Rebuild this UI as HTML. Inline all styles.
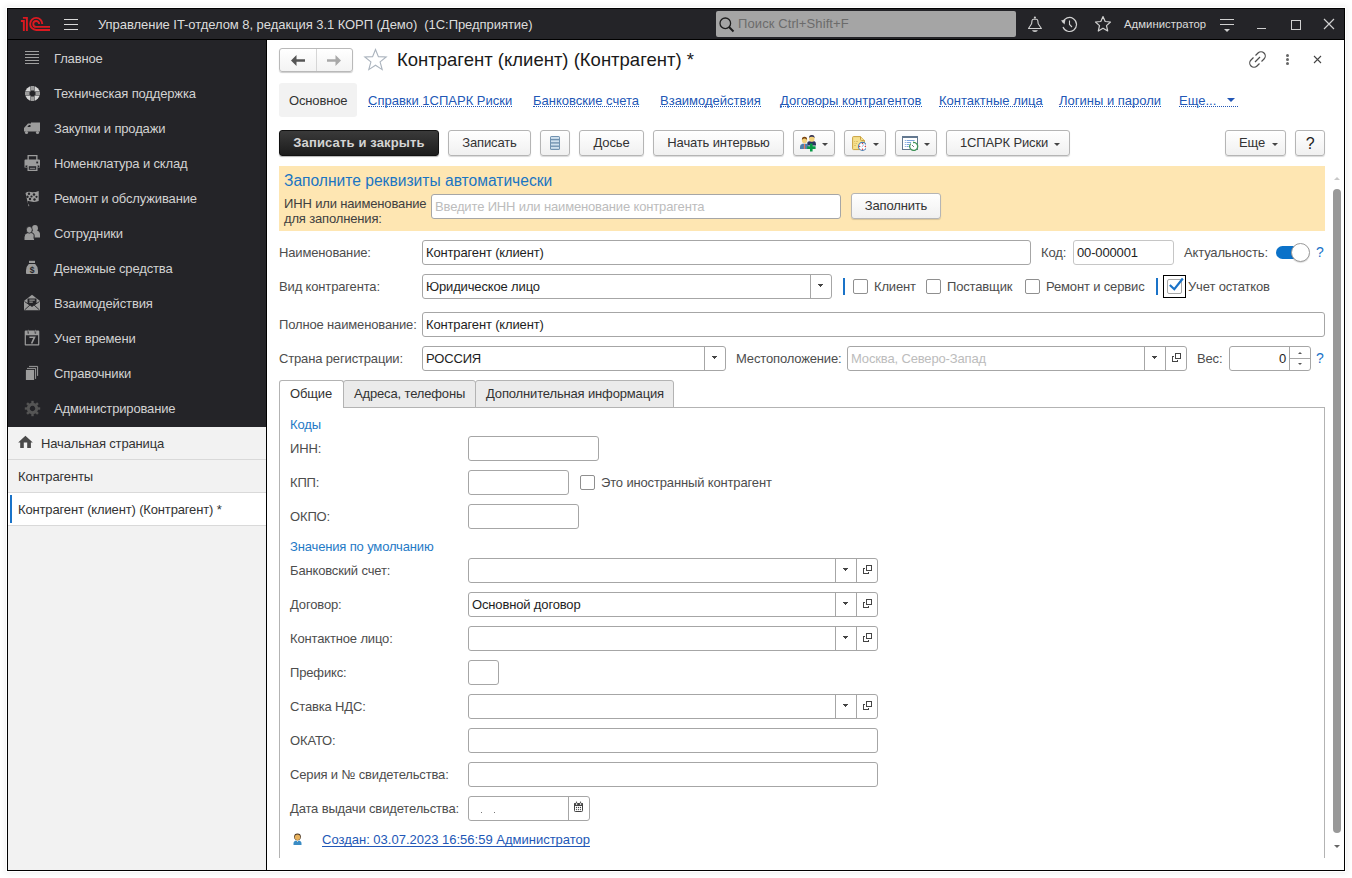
<!DOCTYPE html>
<html><head><meta charset="utf-8">
<style>
*{box-sizing:border-box;margin:0;padding:0}
html,body{width:1352px;height:878px;overflow:hidden;background:#fff;font-family:"Liberation Sans",sans-serif;font-size:13px;color:#4d4d4d;letter-spacing:-0.15px}
.a{position:absolute}
.t{position:absolute;white-space:nowrap;line-height:16px}
#win{position:absolute;left:7px;top:8px;width:1338px;height:863px;border:1px solid #000;box-shadow:0 0 0 1px #fff,0 0 6px 2px rgba(0,0,0,0.07);background:#fff;overflow:hidden}
#hdr{position:absolute;left:8px;top:9px;width:1336px;height:30px;background:#242428}
#hdrline{position:absolute;left:8px;top:39px;width:1336px;height:1px;background:#000}
#side{position:absolute;left:8px;top:40px;width:258px;height:387px;background:#242428}
#sidel{position:absolute;left:8px;top:427px;width:258px;height:443px;background:#f2f2f2}
#vline{position:absolute;left:266px;top:40px;width:1px;height:830px;background:#000}
.mi{position:absolute;left:54px;color:#d2d2d2;white-space:nowrap;line-height:16px}
.ic{position:absolute}
.btn{position:absolute;height:25px;border:1px solid #b5b5b5;border-radius:3px;background:linear-gradient(#fff,#f0f0f0);box-shadow:0 1px 1px rgba(0,0,0,0.15);color:#333;text-align:center;line-height:23px;white-space:nowrap}
.inp{position:absolute;height:25px;border:1px solid #a6a6a6;border-radius:3px;background:#fff;color:#1e1e1e;line-height:23px;padding-left:3px;white-space:nowrap;overflow:hidden}
.lbl{position:absolute;white-space:nowrap;color:#4d4d4d;line-height:16px}
.lnk{letter-spacing:0;position:absolute;white-space:nowrap;color:#2257b6;line-height:14px;border-bottom:1px dotted #2257b6}
.cb{position:absolute;width:15px;height:15px;border:1px solid #8f8f8f;border-radius:2px;background:#fff}
.dd{position:absolute;top:0;width:21px;height:23px;border-left:1px solid #a6a6a6}
.dd:after{content:"";position:absolute;left:7px;top:9px;width:5px;height:3px;background:linear-gradient(#444,#444) 0 0/5px 1px no-repeat,linear-gradient(#444,#444) 1px 1px/3px 1px no-repeat,linear-gradient(#444,#444) 2px 2px/1px 1px no-repeat}
.op{position:absolute;top:0;width:21px;height:23px;border-left:1px solid #a6a6a6}
.op:before{content:"";position:absolute;left:6px;top:9px;width:4px;height:4px;border:1px solid #444}
.op:after{content:"";position:absolute;left:9px;top:6px;width:4px;height:4px;border:1.3px solid #444;background:#fff;box-shadow:0 0 0 1px #fff}
.grp{position:absolute;white-space:nowrap;color:#1f7ac6;line-height:16px}
.arr{display:inline-block;border-left:3px solid transparent;border-right:3px solid transparent;border-top:3px solid #4d4d4d;vertical-align:middle}
</style></head><body>
<div id="win"></div>
<div id="hdr"></div>
<div id="hdrline"></div>
<div id="side"></div>
<div id="sidel"></div>
<div id="vline"></div>
<!-- header -->
<svg class="ic" style="left:18px;top:14px" width="36" height="20" viewBox="0 0 36 20">
 <g fill="none" stroke="#dc1920" stroke-width="1.9" stroke-linejoin="miter">
  <path d="M2.9 7 H5.85 V16.9"/>
  <path d="M4.9 3.85 H8.9 V16.9"/>
  <path d="M24.25 9.9 A6.05 6.05 0 1 0 18.2 15.95 H32"/>
  <path d="M21.15 9.9 A2.95 2.95 0 1 0 18.2 12.85 H32"/>
 </g>
</svg>
<div class="a" style="left:64px;top:19px;width:14px;height:1px;background:#d9d9d9"></div>
<div class="a" style="left:64px;top:24px;width:14px;height:1px;background:#d9d9d9"></div>
<div class="a" style="left:64px;top:29px;width:14px;height:1px;background:#d9d9d9"></div>
<div class="t" style="left:98px;top:17px;color:#dcdcdc;letter-spacing:-0.05px">Управление IT-отделом 8, редакция 3.1 КОРП (Демо)&nbsp; (1С:Предприятие)</div>
<div class="a" style="left:716px;top:11px;width:300px;height:26px;background:#a5a5a5;border-radius:2px"></div>
<svg class="ic" style="left:719px;top:17px" width="16" height="16" viewBox="0 0 16 16"><circle cx="6.3" cy="6.3" r="5.3" fill="none" stroke="#1e1e1e" stroke-width="1.3"/><path d="M10 10 L14.5 14.5" stroke="#1e1e1e" stroke-width="2"/></svg>
<div class="t" style="left:738px;top:16px;color:#6b6b6b;letter-spacing:0.1px">Поиск Ctrl+Shift+F</div>
<svg class="ic" style="left:1027px;top:16px" width="16" height="17" viewBox="0 0 16 17"><circle cx="7.9" cy="1.6" r="1.1" fill="#d0d0d0"/><path d="M1.5 12.5 L4.6 7.8 L5 4.6 Q5.3 3.3 6.5 3.3 H9.3 Q10.5 3.3 10.8 4.6 L11.2 7.8 L14.4 12.5 Z" fill="none" stroke="#d0d0d0" stroke-width="1.1" stroke-linejoin="round"/><path d="M5 14.3 H10.9 Q10.5 15.9 7.95 15.9 Q5.4 15.9 5 14.3 Z" fill="#d0d0d0"/></svg>
<svg class="ic" style="left:1060px;top:16px" width="18" height="17" viewBox="0 0 18 17"><path d="M2.8 6.5 A7 7 0 1 1 3 11" fill="none" stroke="#d0d0d0" stroke-width="1.2"/><path d="M1 4.5 L4.5 8.5 L5.5 3.5Z" fill="#d0d0d0"/><path d="M9.5 4.5 L9.5 8.5 L12 11" fill="none" stroke="#d0d0d0" stroke-width="1.1"/></svg>
<svg class="ic" style="left:1094px;top:15px" width="18" height="18" viewBox="0 0 18 18"><path d="M9 1.5 L11.2 6.5 L16.5 7 L12.5 10.6 L13.7 16 L9 13.2 L4.3 16 L5.5 10.6 L1.5 7 L6.8 6.5 Z" fill="none" stroke="#d0d0d0" stroke-width="1.2" stroke-linejoin="round"/></svg>
<div class="t" style="left:1124px;top:16px;font-size:11.3px;color:#dcdcdc;letter-spacing:0.05px">Администратор</div>
<div class="a" style="left:1220px;top:19px;width:14px;height:1px;background:#d0d0d0"></div>
<div class="a" style="left:1220px;top:24px;width:14px;height:1px;background:#d0d0d0"></div>
<div class="a" style="left:1224px;top:29px;border-left:3px solid transparent;border-right:3px solid transparent;border-top:3px solid #d0d0d0"></div>
<div class="a" style="left:1257px;top:28px;width:9px;height:1px;background:#d0d0d0"></div>
<div class="a" style="left:1291px;top:20px;width:10px;height:10px;border:1.3px solid #d0d0d0"></div>
<svg class="ic" style="left:1323px;top:18px" width="12" height="12" viewBox="0 0 12 12"><path d="M1 1 L11 11 M11 1 L1 11" stroke="#d0d0d0" stroke-width="1.2"/></svg>

<!-- sidebar items -->
<div class="mi" style="top:51px">Главное</div>
<div class="mi" style="top:86px">Техническая поддержка</div>
<div class="mi" style="top:121px">Закупки и продажи</div>
<div class="mi" style="top:156px">Номенклатура и склад</div>
<div class="mi" style="top:191px">Ремонт и обслуживание</div>
<div class="mi" style="top:226px">Сотрудники</div>
<div class="mi" style="top:261px">Денежные средства</div>
<div class="mi" style="top:296px">Взаимодействия</div>
<div class="mi" style="top:331px">Учет времени</div>
<div class="mi" style="top:366px">Справочники</div>
<div class="mi" style="top:401px">Администрирование</div>
<!-- sidebar icons -->
<svg class="ic" style="left:24px;top:50px" width="16" height="16" viewBox="0 0 16 16"><g stroke="#a0a0a0" stroke-width="1"><path d="M1 1.5H15M1 4.5H15M1 7.5H15M1 10.5H15M1 13.5H15"/></g></svg>
<svg class="ic" style="left:24px;top:85px" width="17" height="17" viewBox="0 0 17 17">
 <circle cx="8.5" cy="8.5" r="7.5" fill="#d6d6d6"/>
 <g fill="#242428"><rect x="6.5" y="0" width="4" height="17"/><rect x="0" y="6.5" width="17" height="4"/></g>
 <g fill="#9c9c9c"><rect x="7" y="1" width="3" height="4.5"/><rect x="7" y="11.5" width="3" height="4.5"/><rect x="1" y="7" width="4.5" height="3"/><rect x="11.5" y="7" width="4.5" height="3"/></g>
</svg>
<svg class="ic" style="left:23px;top:122px" width="18" height="13" viewBox="0 0 18 13">
 <path d="M1 6 L5 1.5 L8 1.5 L8 0.5 L17 0.5 L17 9.5 L1 9.5Z" fill="#9c9c9c"/>
 <path d="M4.3 5 L6 3 L7.5 3 L7.5 5Z" fill="#242428"/>
 <circle cx="3.5" cy="10.5" r="1.6" fill="#9c9c9c"/><circle cx="14.5" cy="10.5" r="1.6" fill="#9c9c9c"/>
 <path d="M2 10H5.5M13 10H16" stroke="#242428" stroke-width="0"/>
</svg>
<svg class="ic" style="left:24px;top:154px" width="17" height="18" viewBox="0 0 17 18">
 <path d="M3.5 1 H13.5 V6 H12.2 V2.3 H4.8 V6 H3.5Z" fill="#9c9c9c"/>
 <path d="M0.5 6.5 Q0.5 5.5 1.5 5.5 H15 Q16 5.5 16 6.5 V13.5 H13.5 V11 H3.5 V13.5 H0.5Z" fill="#9c9c9c"/>
 <rect x="12.3" y="7.6" width="1.8" height="1.8" fill="#242428"/>
 <rect x="1.5" y="11.5" width="1.5" height="1.5" fill="#242428"/><rect x="13.9" y="11.5" width="1.5" height="1.5" fill="#242428"/>
 <path d="M3.5 11 H13.5 V17 H3.5Z M4.8 12.3 V15.7 H12.2 V12.3Z" fill="#9c9c9c" fill-rule="evenodd"/>
 <rect x="5.8" y="13.8" width="5.4" height="0.9" fill="#9c9c9c"/>
</svg>
<svg class="ic" style="left:24px;top:190px" width="16" height="17" viewBox="0 0 16 17">
 <path d="M1.5 3 Q4 1 7 2 Q10 3 14.7 1 L14.7 11 Q10 12.5 7 11.5 Q4 10.5 2.8 11.5 L5.5 16 L4.5 16.3 Z" fill="#9c9c9c"/>
 <g fill="#242428"><circle cx="5" cy="3.8" r="1.2"/><circle cx="10" cy="4.5" r="1.2"/><circle cx="3.5" cy="6.8" r="1.2"/><circle cx="7.5" cy="6.5" r="1.1"/><circle cx="12.5" cy="6.8" r="1.1"/><circle cx="6" cy="9" r="1.2"/><circle cx="10.5" cy="9.5" r="1.2"/></g>
</svg>
<svg class="ic" style="left:23px;top:224px" width="18" height="17" viewBox="0 0 18 17">
 <path d="M9 7.5 Q9.5 6.5 11 6.5 H13.5 Q17 7 17 10.5 V13.5 H10Z" fill="#9c9c9c"/>
 <ellipse cx="12" cy="4.2" rx="2.9" ry="3.3" fill="#9c9c9c"/>
 <path d="M11 14 Q12 9 8 8.5 H5 Q1 9 1 13 V16.5 H12Z" fill="#9c9c9c" stroke="#242428" stroke-width="1"/>
 <ellipse cx="6.3" cy="5.8" rx="3" ry="3.4" fill="#9c9c9c" stroke="#242428" stroke-width="0.8"/>
</svg>
<svg class="ic" style="left:25px;top:260px" width="14" height="15" viewBox="0 0 14 15">
 <rect x="4" y="0.8" width="6" height="2.2" fill="#9c9c9c"/>
 <path d="M3.8 4 H10.2 Q13 6.5 13 10.5 V13.2 Q13 14 12 14 H2 Q1 14 1 13.2 V10.5 Q1 6.5 3.8 4Z" fill="#9c9c9c"/>
 <text x="7" y="12.5" font-size="8.5" font-family="Liberation Sans" fill="#242428" text-anchor="middle" font-weight="bold">$</text>
</svg>
<svg class="ic" style="left:24px;top:294px" width="17" height="17" viewBox="0 0 17 17">
 <path d="M0 7 L8 0.7 L16 7 V16.2 H0Z" fill="#9c9c9c"/>
 <path d="M0.5 16 L6.5 10.5 M15.5 16 L9.5 10.5 M0.5 7.5 L5 10.5 M15.5 7.5 L11 10.5" fill="none" stroke="#242428" stroke-width="0.9"/>
 <path d="M3.5 4.6 H12.5 V9.5 L8 13 L3.5 9.5Z" fill="#242428"/>
 <rect x="5.3" y="5.5" width="5.5" height="1.3" fill="#8a8a8a"/><rect x="5.3" y="7.5" width="3.5" height="1.3" fill="#8a8a8a"/>
</svg>
<svg class="ic" style="left:24px;top:329px" width="16" height="17" viewBox="0 0 16 17">
 <path d="M0.7 2.5 Q0.7 1.5 1.7 1.5 H14.3 Q15.3 1.5 15.3 2.5 V15.8 Q15.3 16.5 14.5 16.5 H1.5 Q0.7 16.5 0.7 15.8Z M1.9 6.2 V15.3 H14.1 V6.2Z" fill="#9c9c9c" fill-rule="evenodd"/>
 <path d="M4.3 0.5 V4.5 M11.4 0.5 V4.5" stroke="#242428" stroke-width="1.4"/>
 <path d="M4.3 0.8 V3.6 M11.4 0.8 V3.6" stroke="#9c9c9c" stroke-width="0.8"/>
 <path d="M5.4 8.2 H10.5 L7.6 14.5" fill="none" stroke="#9c9c9c" stroke-width="1.6"/>
</svg>
<svg class="ic" style="left:25px;top:365px" width="14" height="16" viewBox="0 0 14 16">
 <rect x="0.9" y="4.9" width="8.2" height="10.1" fill="#9c9c9c"/>
 <path d="M2 3.4 H10.6 V13.9" fill="none" stroke="#9c9c9c" stroke-width="1"/>
 <path d="M4 1.4 H12.6 V10.9" fill="none" stroke="#9c9c9c" stroke-width="1"/>
</svg>
<svg class="ic" style="left:24px;top:400px" width="17" height="17" viewBox="0 0 17 17">
 <g fill="#555"><path d="M8.5 2.8 A5.7 5.7 0 1 1 8.49 2.8Z M8.5 5.8 A2.7 2.7 0 1 0 8.51 5.8Z" fill-rule="evenodd"/>
 <g id="tooth"><rect x="7.3" y="0.8" width="2.4" height="3"/></g>
 <rect x="7.3" y="13.2" width="2.4" height="3"/><rect x="0.8" y="7.3" width="3" height="2.4"/><rect x="13.2" y="7.3" width="3" height="2.4"/>
 <rect x="7.3" y="0.8" width="2.4" height="3" transform="rotate(45 8.5 8.5)"/><rect x="7.3" y="13.2" width="2.4" height="3" transform="rotate(45 8.5 8.5)"/>
 <rect x="0.8" y="7.3" width="3" height="2.4" transform="rotate(45 8.5 8.5)"/><rect x="13.2" y="7.3" width="3" height="2.4" transform="rotate(45 8.5 8.5)"/></g>
</svg>

<!-- open windows panel -->
<svg class="ic" style="left:18px;top:435px" width="16" height="14" viewBox="0 0 16 14"><path d="M7.4 0.8 L14.8 7.5 L12.9 7.5 L12.9 12.9 L9.2 12.9 L9.2 7.5 L5.8 7.5 L5.8 12.9 L2.2 12.9 L2.2 7.5 L0.2 7.5Z" fill="#4a4a4a"/></svg>
<div class="t" style="left:41px;top:436px;color:#333">Начальная страница</div>
<div class="a" style="left:8px;top:459px;width:258px;height:1px;background:#d9d9d9"></div>
<div class="t" style="left:18px;top:469px;color:#333">Контрагенты</div>
<div class="a" style="left:8px;top:492px;width:258px;height:34px;background:#fff;border-top:1px solid #d9d9d9;border-bottom:1px solid #d9d9d9"></div>
<div class="a" style="left:10px;top:495px;width:2px;height:28px;background:#1a73c8"></div>
<div class="t" style="left:18px;top:502px;color:#333">Контрагент (клиент) (Контрагент) *</div>
<!-- form title bar -->
<div class="a" style="left:279px;top:48px;width:74px;height:24px;border:1px solid #b9b9b9;border-radius:3px;background:linear-gradient(#fff,#f3f3f3);box-shadow:0 1px 1px rgba(0,0,0,0.2)"></div>
<div class="a" style="left:316px;top:49px;width:1px;height:22px;background:#d6d6d6"></div>
<svg class="ic" style="left:290px;top:55px" width="16" height="11" viewBox="0 0 16 11"><path d="M1 5.5 L6.5 0 L6.5 4.3 L15 4.3 L15 6.7 L6.5 6.7 L6.5 11Z" fill="#555"/></svg>
<svg class="ic" style="left:326px;top:55px" width="16" height="11" viewBox="0 0 16 11"><path d="M15 5.5 L9.5 0 L9.5 4.3 L1 4.3 L1 6.7 L9.5 6.7 L9.5 11Z" fill="#a8a8a8"/></svg>
<svg class="ic" style="left:363px;top:48px" width="25" height="24" viewBox="0 0 25 24"><path d="M12.5 1.5 L15.4 8.6 L23.2 9 L17.1 13.9 L19.2 21.6 L12.5 17.2 L5.8 21.6 L7.9 13.9 L1.8 9 L9.6 8.6Z" fill="none" stroke="#aab3bd" stroke-width="1.1" stroke-linejoin="miter"/></svg>
<div class="t" style="left:397px;top:49px;font-size:18.5px;line-height:22px;color:#1a1a1a;letter-spacing:0">Контрагент (клиент) (Контрагент) *</div>
<svg class="ic" style="left:1249px;top:51px" width="17" height="17" viewBox="0 0 17 17"><g fill="none" stroke="#4d4d4d" stroke-width="1.2"><path d="M6.5 4.5 L9 2 A3 3 0 0 1 15 8 L12.5 10.5"/><path d="M10.5 12.5 L8 15 A3 3 0 0 1 2 9 L4.5 6.5"/><path d="M6 11 L11 6"/></g></svg>
<div class="a" style="left:1286px;top:54px;width:3px;height:3px;border-radius:50%;background:#666"></div>
<div class="a" style="left:1286px;top:58px;width:3px;height:3px;border-radius:50%;background:#666"></div>
<div class="a" style="left:1286px;top:62px;width:3px;height:3px;border-radius:50%;background:#666"></div>
<svg class="ic" style="left:1313px;top:55px" width="9" height="9" viewBox="0 0 9 9"><path d="M1 1 L8 8 M8 1 L1 8" stroke="#444" stroke-width="1.1"/></svg>

<!-- links row -->
<div class="a" style="left:279px;top:83px;width:78px;height:34px;background:#f2f2f2;border-radius:3px"></div>
<div class="t" style="left:289px;top:93px;color:#333">Основное</div>
<div class="lnk" style="left:368px;top:95px;line-height:11px">Справки 1СПАРК Риски</div>
<div class="lnk" style="left:533px;top:95px;line-height:11px">Банковские счета</div>
<div class="lnk" style="left:660px;top:95px;line-height:11px">Взаимодействия</div>
<div class="lnk" style="left:780px;top:95px;line-height:11px">Договоры контрагентов</div>
<div class="lnk" style="left:939px;top:95px;line-height:11px">Контактные лица</div>
<div class="lnk" style="left:1059px;top:95px;line-height:11px">Логины и пароли</div>
<div class="lnk" style="left:1179px;top:95px;line-height:11px;width:59px">Еще...</div>
<div class="a" style="left:1227px;top:98px;border-left:4px solid transparent;border-right:4px solid transparent;border-top:4px solid #2257b6"></div>

<!-- command bar -->
<div class="a" style="left:279px;top:130px;width:160px;height:26px;border:1px solid #111;border-radius:3px;background:linear-gradient(#3a3a3a,#1c1c1c);box-shadow:0 1px 1px rgba(0,0,0,0.3)"></div>
<div class="t" style="left:279px;top:135px;width:160px;text-align:center;font-weight:bold;color:#d4d4d4;letter-spacing:0.15px">Записать и закрыть</div>
<div class="btn" style="left:448px;top:130px;width:83px;height:26px">Записать</div>
<div class="btn" style="left:540px;top:130px;width:30px;height:26px"></div>
<svg class="ic" style="left:550px;top:136px" width="10" height="14" viewBox="0 0 10 14"><rect x="0" y="0" width="10" height="14" rx="1.6" fill="#7192b0"/><g fill="#cfe0ee"><rect x="1" y="1" width="8" height="1.9"/><rect x="1" y="4.3" width="8" height="1.9"/><rect x="1" y="7.6" width="8" height="1.9"/><rect x="1" y="10.9" width="8" height="1.9"/></g></svg>
<div class="btn" style="left:579px;top:130px;width:65px;height:26px">Досье</div>
<div class="btn" style="left:653px;top:130px;width:131px;height:26px">Начать интервью</div>
<div class="btn" style="left:793px;top:130px;width:42px;height:26px"></div>
<svg class="ic" style="left:799px;top:134px" width="19" height="18" viewBox="0 0 19 18">
 <path d="M8.5 8 Q9 7.5 11 7.3 H15.5 Q17 7.8 17 10.5 V11.5 H8Z" fill="#2b3560"/>
 <ellipse cx="12.8" cy="4.4" rx="2.7" ry="3.3" fill="#f3d27a"/>
 <path d="M10 4 Q10 1 12.8 1 Q15.6 1 15.6 4 Q14.5 2.6 12.8 2.8 Q11 2.6 10 4Z" fill="#2f2f5a"/>
 <path d="M1 15 V12.5 Q1 10.2 3.5 9.8 H7.5 Q9.5 10.2 9.5 12.5 V15Z" fill="#4f7fab"/>
 <path d="M5 10 H6 L6.2 15 H4.8Z" fill="#e77a5e"/>
 <ellipse cx="5.5" cy="6.2" rx="2.6" ry="3.1" fill="#f3d27a"/>
 <path d="M2.9 6 Q2.8 2.8 5.5 2.8 Q8.2 2.8 8.1 6 Q7.3 4.3 5.5 4.4 Q3.7 4.3 2.9 6Z" fill="#7a4410"/>
 <path d="M11 9.5 H13.6 V12.3 H16.6 V14.9 H13.6 V17.6 H11 V14.9 H8.2 V12.3 H11Z" fill="#079a45"/>
</svg>
<div class="a" style="left:822px;top:143px;border-left:3px solid transparent;border-right:3px solid transparent;border-top:3px solid #444"></div>
<div class="btn" style="left:844px;top:130px;width:42px;height:26px"></div>
<svg class="ic" style="left:852px;top:136px" width="14" height="15" viewBox="0 0 14 15">
 <path d="M0.6 1.5 Q0.6 0.6 1.5 0.6 H8.5 L12.4 4.5 V12.8 Q12.4 13.6 11.5 13.6 H1.5 Q0.6 13.6 0.6 12.8Z" fill="#f6e08e" stroke="#c8a040" stroke-width="1"/>
 <path d="M8.5 0.6 V3.6 Q8.5 4.5 9.4 4.5 H12.4" fill="#f6e08e" stroke="#c8a040" stroke-width="1"/>
 <path d="M2 5.5H3M3.8 5.5H6M2 7.5H2.6M3.5 7.5H5M2 9.5H4" stroke="#d9bb60" stroke-width="0.8"/>
 <circle cx="10.5" cy="10.4" r="4" fill="#fff" stroke="#4b7db3" stroke-width="1.1"/>
 <g fill="#e0201f"><circle cx="10.5" cy="7.6" r="0.65"/><circle cx="10.5" cy="13.2" r="0.65"/><circle cx="7.7" cy="10.4" r="0.65"/><circle cx="13.3" cy="10.4" r="0.65"/></g>
 <path d="M10.5 10.4 L11.8 8.4 M10.5 10.4 L9.8 11" stroke="#7fa0d0" stroke-width="0.8"/>
</svg>
<div class="a" style="left:873px;top:143px;border-left:3px solid transparent;border-right:3px solid transparent;border-top:3px solid #444"></div>
<div class="btn" style="left:895px;top:130px;width:42px;height:26px"></div>
<svg class="ic" style="left:902px;top:136px" width="17" height="15" viewBox="0 0 17 15">
 <rect x="0.5" y="0.5" width="15" height="13" fill="#fff" stroke="#63788f" stroke-width="1"/>
 <rect x="0" y="0" width="16" height="2" fill="#63788f"/>
 <g fill="#7ea6de"><rect x="2.8" y="4" width="1" height="1"/><rect x="2.8" y="6" width="1" height="1"/><rect x="2.8" y="8" width="1" height="1"/><rect x="2.8" y="10" width="1" height="1"/>
 <rect x="4.6" y="4" width="8" height="1"/><rect x="4.6" y="6" width="4.5" height="1"/><rect x="4.6" y="8" width="2.5" height="1"/><rect x="4.6" y="10" width="2" height="1"/></g>
 <circle cx="11.5" cy="10.4" r="4" fill="#fff"/>
 <path d="M8.8 7.6 A4 4 0 1 0 11.5 6.4" fill="none" stroke="#3f9358" stroke-width="1.3"/>
 <path d="M11 5.5 L13 6.4 L11.3 7.5Z" fill="#3f9358"/>
 <path d="M10.2 9.2 L11.8 10.8" stroke="#4a5a70" stroke-width="1"/>
</svg>
<div class="a" style="left:924px;top:143px;border-left:3px solid transparent;border-right:3px solid transparent;border-top:3px solid #444"></div>
<div class="btn" style="left:946px;top:130px;width:124px;height:26px;text-align:left;padding-left:13px">1СПАРК Риски</div>
<div class="a" style="left:1054px;top:143px;border-left:3px solid transparent;border-right:3px solid transparent;border-top:3px solid #444"></div>
<div class="btn" style="left:1225px;top:130px;width:61px;height:26px;text-align:left;padding-left:13px">Еще</div>
<div class="a" style="left:1272px;top:143px;border-left:3px solid transparent;border-right:3px solid transparent;border-top:3px solid #444"></div>
<div class="btn" style="left:1295px;top:130px;width:30px;height:26px;font-size:16px;color:#222;line-height:25px">?</div>

<!-- yellow panel -->
<div class="a" style="left:279px;top:166px;width:1046px;height:65px;background:#fee6b2"></div>
<div class="t" style="left:284px;top:172px;font-size:15.6px;line-height:18px;color:#1a75c2;letter-spacing:0">Заполните реквизиты автоматически</div>
<div class="t" style="left:284px;top:196px;line-height:15px;color:#404040">ИНН или наименование<br>для заполнения:</div>
<div class="inp" style="left:431px;top:194px;width:410px;color:#bcbcbc">Введите ИНН или наименование контрагента</div>
<div class="btn" style="left:851px;top:193px;width:90px;height:26px">Заполнить</div>
<!-- main form fields -->
<div class="lbl" style="left:279px;top:245px">Наименование:</div>
<div class="inp" style="left:422px;top:240px;width:609px">Контрагент (клиент)</div>
<div class="lbl" style="left:1041px;top:245px">Код:</div>
<div class="inp" style="left:1073px;top:240px;width:101px;border-color:#c6c6c6">00-000001</div>
<div class="lbl" style="left:1184px;top:245px">Актуальность:</div>
<div class="a" style="left:1276px;top:246px;width:26px;height:13px;border-radius:6.5px;background:#0b72c9"></div>
<div class="a" style="left:1291px;top:243px;width:19px;height:19px;border-radius:50%;background:#fff;border:1px solid #9a9a9a;box-shadow:0 1px 1px rgba(0,0,0,0.15)"></div>
<div class="lbl" style="left:1316px;top:244px;font-size:14px;color:#1a73c8">?</div>

<div class="lbl" style="left:279px;top:279px">Вид контрагента:</div>
<div class="inp" style="left:422px;top:274px;width:410px">Юридическое лицо<div class="dd" style="left:387px"></div></div>
<div class="a" style="left:843px;top:278px;width:2px;height:17px;background:#1a73c8"></div>
<div class="cb" style="left:853px;top:279px"></div>
<div class="lbl" style="left:874px;top:279px">Клиент</div>
<div class="cb" style="left:926px;top:279px"></div>
<div class="lbl" style="left:947px;top:279px">Поставщик</div>
<div class="cb" style="left:1025px;top:279px"></div>
<div class="lbl" style="left:1046px;top:279px">Ремонт и сервис</div>
<div class="a" style="left:1156px;top:278px;width:2px;height:17px;background:#1a73c8"></div>
<div class="a" style="left:1163px;top:275px;width:23px;height:23px;border:1px solid #000"></div>
<div class="cb" style="left:1167px;top:279px;border-color:#a8a8a8"></div>
<svg class="ic" style="left:1167px;top:276px" width="18" height="16" viewBox="0 0 18 16"><path d="M2.8 9 L7.3 13.2 L15.8 2.5" fill="none" stroke="#1a73c8" stroke-width="2.2"/></svg>
<div class="lbl" style="left:1188px;top:279px">Учет остатков</div>

<div class="lbl" style="left:279px;top:317px">Полное наименование:</div>
<div class="inp" style="left:422px;top:312px;width:903px">Контрагент (клиент)</div>

<div class="lbl" style="left:279px;top:351px">Страна регистрации:</div>
<div class="inp" style="left:422px;top:346px;width:304px">РОССИЯ<div class="dd" style="left:281px"></div></div>
<div class="lbl" style="left:736px;top:351px">Местоположение:</div>
<div class="inp" style="left:847px;top:346px;width:340px;color:#bcbcbc">Москва, Северо-Запад<div class="dd" style="left:296px"></div><div class="op" style="left:317px"></div></div>
<div class="lbl" style="left:1197px;top:351px">Вес:</div>
<div class="inp" style="left:1229px;top:346px;width:82px;text-align:right;padding-right:24px">0<div class="a" style="left:59px;top:0;width:1px;height:23px;background:#a6a6a6"></div><div class="a" style="left:60px;top:11px;width:20px;height:1px;background:#a6a6a6"></div><div class="a" style="left:68px;top:5px;border-left:2px solid transparent;border-right:2px solid transparent;border-bottom:2px solid #555"></div><div class="a" style="left:68px;top:16px;border-left:2px solid transparent;border-right:2px solid transparent;border-top:2px solid #555"></div></div>
<div class="lbl" style="left:1316px;top:350px;font-size:14px;color:#1a73c8">?</div>

<!-- tabs -->
<div class="a" style="left:279px;top:407px;width:1046px;height:451px;border:1px solid #b3b3b3;border-bottom:none;background:#fff"></div>
<div class="a" style="left:343px;top:380px;width:133px;height:28px;border:1px solid #b3b3b3;border-radius:3px 3px 0 0;background:#ebebeb"></div>
<div class="a" style="left:475px;top:380px;width:199px;height:28px;border:1px solid #b3b3b3;border-radius:3px 3px 0 0;background:#ebebeb"></div>
<div class="a" style="left:279px;top:380px;width:65px;height:28px;border:1px solid #b3b3b3;border-bottom:none;border-radius:3px 3px 0 0;background:#fff"></div>
<div class="lbl" style="left:290px;top:386px;color:#333">Общие</div>
<div class="lbl" style="left:354px;top:386px;color:#333">Адреса, телефоны</div>
<div class="lbl" style="left:486px;top:386px;color:#333">Дополнительная информация</div>

<div class="grp" style="left:290px;top:417px">Коды</div>
<div class="lbl" style="left:290px;top:441px">ИНН:</div>
<div class="inp" style="left:468px;top:436px;width:131px"></div>
<div class="lbl" style="left:290px;top:475px">КПП:</div>
<div class="inp" style="left:468px;top:470px;width:101px"></div>
<div class="cb" style="left:580px;top:475px"></div>
<div class="lbl" style="left:601px;top:475px">Это иностранный контрагент</div>
<div class="lbl" style="left:290px;top:509px">ОКПО:</div>
<div class="inp" style="left:468px;top:504px;width:111px"></div>
<div class="grp" style="left:290px;top:539px">Значения по умолчанию</div>
<div class="lbl" style="left:290px;top:563px">Банковский счет:</div>
<div class="inp" style="left:468px;top:558px;width:410px"><div class="dd" style="left:366px"></div><div class="op" style="left:387px"></div></div>
<div class="lbl" style="left:290px;top:597px">Договор:</div>
<div class="inp" style="left:468px;top:592px;width:410px">Основной договор<div class="dd" style="left:366px"></div><div class="op" style="left:387px"></div></div>
<div class="lbl" style="left:290px;top:631px">Контактное лицо:</div>
<div class="inp" style="left:468px;top:626px;width:410px"><div class="dd" style="left:366px"></div><div class="op" style="left:387px"></div></div>
<div class="lbl" style="left:290px;top:665px">Префикс:</div>
<div class="inp" style="left:468px;top:660px;width:31px"></div>
<div class="lbl" style="left:290px;top:699px">Ставка НДС:</div>
<div class="inp" style="left:468px;top:694px;width:410px"><div class="dd" style="left:366px"></div><div class="op" style="left:387px"></div></div>
<div class="lbl" style="left:290px;top:733px">ОКАТО:</div>
<div class="inp" style="left:468px;top:728px;width:410px"></div>
<div class="lbl" style="left:290px;top:767px">Серия и № свидетельства:</div>
<div class="inp" style="left:468px;top:762px;width:410px"></div>
<div class="lbl" style="left:290px;top:801px">Дата выдачи свидетельства:</div>
<div class="inp" style="left:468px;top:796px;width:122px"><div class="a" style="left:99px;top:0;width:1px;height:23px;background:#a6a6a6"></div></div>
<div class="a" style="left:481px;top:812px;width:1px;height:1px;background:#777"></div>
<div class="a" style="left:494px;top:812px;width:1px;height:1px;background:#777"></div>
<svg class="ic" style="left:574px;top:801px" width="10" height="12" viewBox="0 0 10 12"><rect x="0.5" y="2.5" width="8" height="8" rx="0.8" fill="#fff" stroke="#444" stroke-width="1"/><rect x="0" y="2" width="9" height="3" rx="0.8" fill="#444"/><rect x="1.9" y="2.3" width="1.3" height="1.5" fill="#fff"/><rect x="5.9" y="2.3" width="1.3" height="1.5" fill="#fff"/><circle cx="2.5" cy="1.3" r="0.7" fill="#444"/><circle cx="6.5" cy="1.3" r="0.7" fill="#444"/><g fill="#444"><circle cx="2.5" cy="6.5" r="0.65"/><circle cx="4.5" cy="6.5" r="0.65"/><circle cx="6.5" cy="6.5" r="0.65"/><circle cx="2.5" cy="8.6" r="0.65"/><circle cx="4.5" cy="8.6" r="0.65"/><circle cx="6.5" cy="8.6" r="0.65"/></g></svg>
<svg class="ic" style="left:292px;top:832px" width="11" height="14" viewBox="0 0 11 14"><path d="M1.5 13 V11.5 Q1.5 8.8 4.5 8.5 L5.5 10 L6.5 8.5 Q9.5 8.8 9.5 11.5 V13Z" fill="#3a8cc4"/><circle cx="5.5" cy="4.8" r="3.4" fill="#4a3520"/><circle cx="5.5" cy="5.3" r="2.7" fill="#e8b25e"/><path d="M4.3 7.5 H6.7 L5.5 9Z" fill="#e8b25e"/></svg>
<div class="lnk" style="left:322px;top:834px;line-height:12px;border-bottom:1px solid #2257b6">Создан: 03.07.2023 16:56:59 Администратор</div>

<!-- scrollbar -->
<div class="a" style="left:1334px;top:177px;border-left:3px solid transparent;border-right:3px solid transparent;border-bottom:3px solid #c8c8c8"></div>
<div class="a" style="left:1333px;top:189px;width:8px;height:644px;border-radius:4px;background:#999"></div>
<div class="a" style="left:1334px;top:845px;border-left:3px solid transparent;border-right:3px solid transparent;border-top:3px solid #666"></div>
</body></html>
